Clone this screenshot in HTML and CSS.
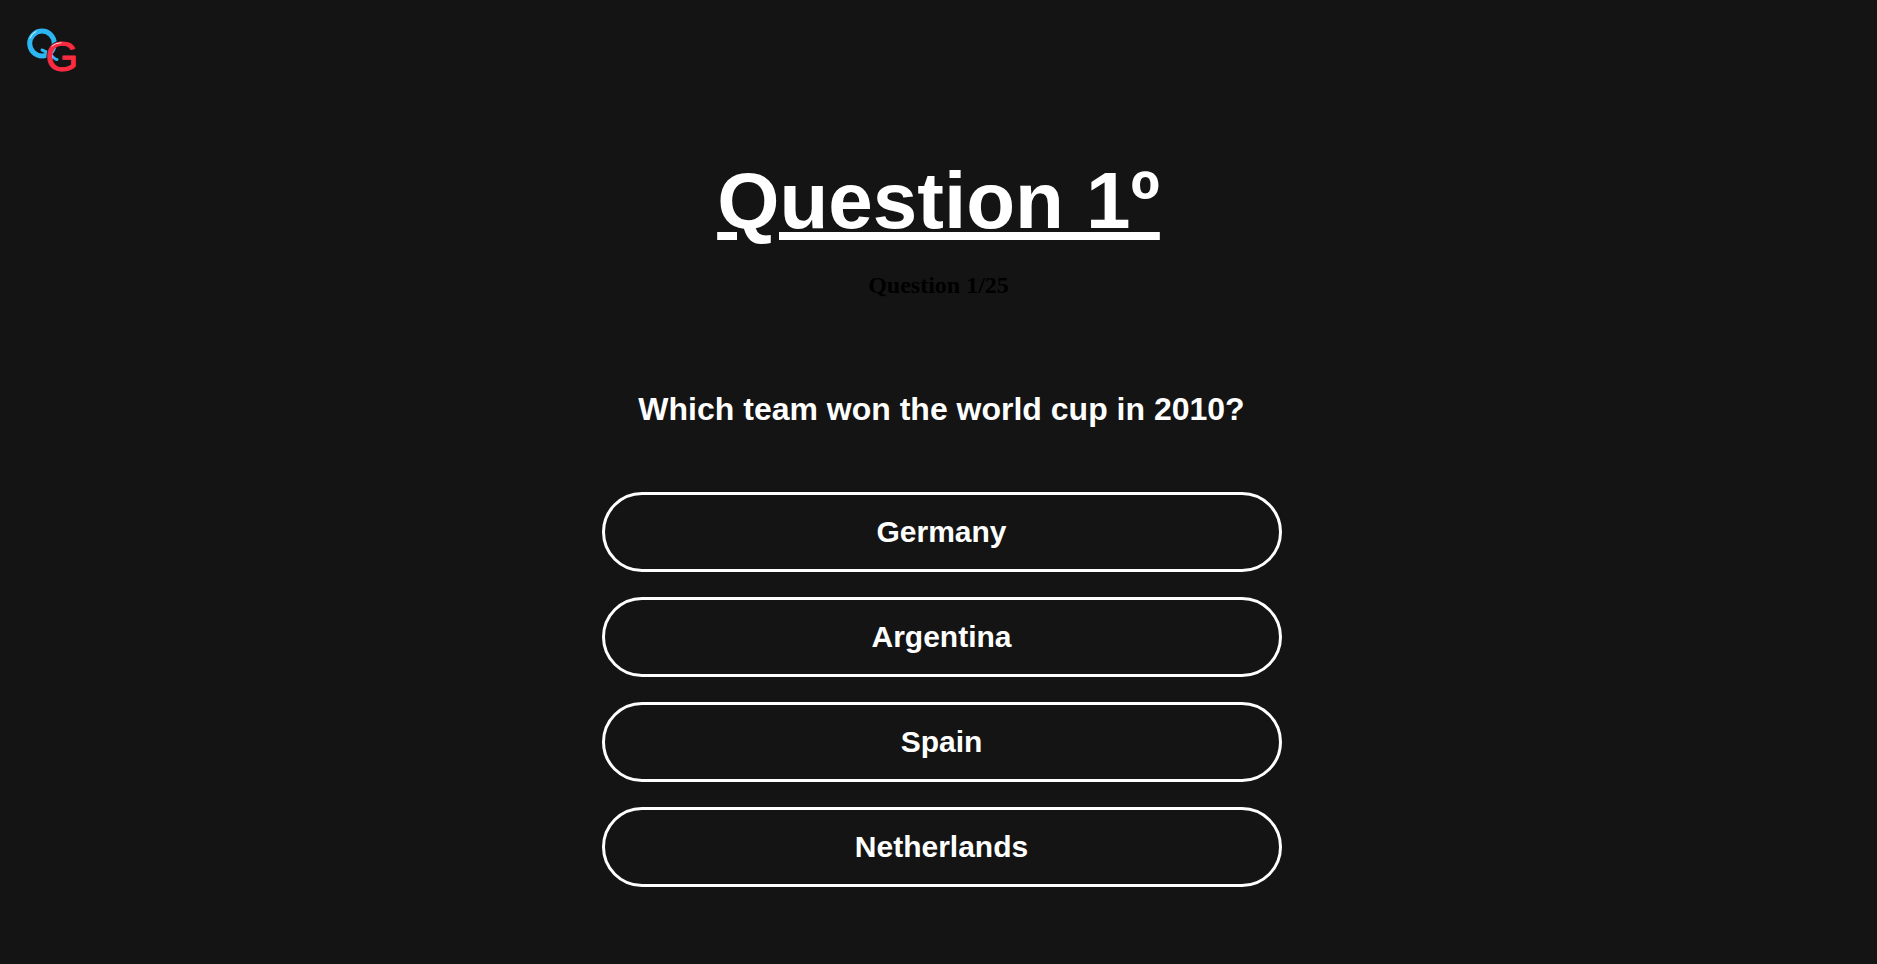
FILE: index.html
```html
<!DOCTYPE html>
<html lang="en">
<head>
<meta charset="utf-8">
<title>Quiz Game</title>
<link rel="stylesheet" href="styles.css">
</head>
<body>
<header class="topbar">
  <a class="logo" href="#" aria-label="Quiz Game home">
    <svg class="logo-mark" viewBox="0 0 56 52" width="56" height="52" aria-hidden="true">
      <ellipse class="logo-ring" cx="18" cy="19.500" rx="12.300" ry="12.500"/>
      <path class="logo-tail" d="M18 26Q24 28 28 32T33 35.500"/>
      <ellipse class="logo-gap" cx="37.500" cy="32.500" rx="12.500" ry="13.500"/>
      <text class="logo-g" x="21.500" y="47">G</text>
      <path class="logo-shine" d="M6 14Q8 9 12 7.500M28 22Q31 19 37 18.700"/>
    </svg>
  </a>
</header>
<main class="quiz">
  <h1 class="title">Question 1º</h1>
  <h2 class="progress">Question 1/25</h2>
  <section class="panel">
    <h2 class="question">Which team won the world cup in 2010?</h2>
    <div class="answers">
      <button class="answer" type="button">Germany</button>
      <button class="answer" type="button">Argentina</button>
      <button class="answer" type="button">Spain</button>
      <button class="answer" type="button">Netherlands</button>
    </div>
  </section>
</main>
</body>
</html>
```
FILE: styles.css
```css
* {
  box-sizing: border-box;
}

body {
  margin: 0;
  background: #141414;
  color: #fff;
  font-family: "Liberation Sans", Arial, sans-serif;
}

.topbar {
  display: flex;
  padding: 24px;
}

.logo {
  display: block;
}

.logo-mark {
  display: block;
  overflow: visible;
}

.logo-ring,
.logo-tail {
  fill: none;
  stroke: #2db7f2;
  stroke-width: 5;
  stroke-linecap: round;
}

.logo-tail {
  stroke-width: 3;
}

.logo-gap {
  fill: none;
  stroke: #141414;
  stroke-width: 5;
}

.logo-g {
  font-family: "Liberation Sans", Arial, sans-serif;
  font-size: 42px;
  fill: #fa2c41;
  stroke: #fa2c41;
  stroke-width: 1;
  stroke-linejoin: round;
}

.logo-shine {
  fill: none;
  stroke: #fff;
  stroke-width: 1;
  stroke-linecap: round;
  opacity: 0.8;
}

.quiz {
  display: flex;
  flex-direction: column;
  align-items: center;
  padding: 0 8px 32px;
}

.title {
  margin: 55px 0 0;
  font-size: 80px;
  line-height: 92px;
  text-decoration: underline;
}

.progress {
  margin: 24px 0 0;
  color: #000;
  font-family: "Liberation Serif", "Times New Roman", serif;
  font-size: 24px;
  line-height: 28px;
}

.panel {
  display: flex;
  flex-direction: column;
  align-items: center;
  width: 100%;
  max-width: 686px;
  margin: 92px 0 0;
  padding-left: 6px;
}

.question {
  margin: 0;
  font-size: 32px;
  line-height: 36px;
  text-align: center;
}

.answers {
  display: flex;
  flex-direction: column;
  gap: 25px;
  width: 100%;
  margin-top: 65px;
}

.answer {
  width: 100%;
  height: 80px;
  border: 3px solid #fff;
  border-radius: 40px;
  background: transparent;
  color: #fff;
  font: bold 30px "Liberation Sans", Arial, sans-serif;
  cursor: pointer;
}
```
